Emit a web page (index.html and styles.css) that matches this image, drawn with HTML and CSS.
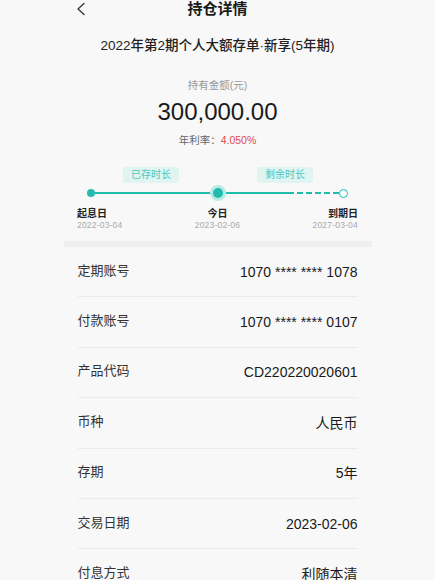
FILE: index.html
```html
<!DOCTYPE html>
<html lang="zh-CN">
<head>
<meta charset="utf-8">
<title>持仓详情</title>
<link rel="stylesheet" href="styles.css">
</head>
<body>
<div class="page">
  <header class="header">
    <div class="back">
      <svg width="10" height="14" viewBox="0 0 10 14"><path d="M8 1.5 L2 7 L8 12.5" fill="none" stroke="#333" stroke-width="1.3" stroke-linecap="round" stroke-linejoin="round"/></svg>
    </div>
    <div class="title">持仓详情</div>
    <div></div>
  </header>

  <div class="product">2022年第2期个人大额存单·新享(5年期)</div>

  <div class="hold-label">持有金额(元)</div>
  <div class="amount">300,000.00</div>
  <div class="rate">年利率：<span class="rate-val">4.050%</span></div>

  <div class="timeline">
    <div class="pills">
      <span class="pill">已存时长</span>
      <span class="pill pill-2">剩余时长</span>
    </div>
    <div class="track">
      <span class="dot"></span>
      <span class="seg seg-1"></span>
      <span class="now"><span class="now-core"></span></span>
      <span class="seg seg-2"></span>
      <span class="dash"></span>
      <span class="end"></span>
    </div>
    <div class="marks">
      <div class="mark mark-l"><div class="mark-name">起息日</div><div class="mark-date">2022-03-04</div></div>
      <div class="mark mark-c"><div class="mark-name">今日</div><div class="mark-date">2023-02-06</div></div>
      <div class="mark mark-r"><div class="mark-name">到期日</div><div class="mark-date">2027-03-04</div></div>
    </div>
  </div>

  <div class="gap-bar"></div>

  <div class="rows">
    <div class="row"><span class="k">定期账号</span><span class="v">1070 **** **** 1078</span></div>
    <div class="row"><span class="k">付款账号</span><span class="v">1070 **** **** 0107</span></div>
    <div class="row"><span class="k">产品代码</span><span class="v">CD220220020601</span></div>
    <div class="row"><span class="k">币种</span><span class="v">人民币</span></div>
    <div class="row"><span class="k">存期</span><span class="v">5年</span></div>
    <div class="row"><span class="k">交易日期</span><span class="v">2023-02-06</span></div>
    <div class="row"><span class="k">付息方式</span><span class="v">利随本清</span></div>
  </div>
</div>
</body>
</html>
```

FILE: styles.css
```css
* { box-sizing: border-box; }
html, body {
  margin: 0;
  padding: 0;
  background: #f8f8f8;
}
body {
  font-family: "Liberation Sans", "Noto Sans CJK SC", sans-serif;
  color: #222;
  overflow: hidden;
  height: 580px;
}
.page {
  width: 308px;
  margin: 0 auto;
}
.header {
  display: grid;
  grid-template-columns: 1fr auto 1fr;
  align-items: center;
  height: 17px;
}
.back {
  padding-left: 12px;
  display: flex;
  align-items: center;
}
.back svg { display: block; }
.title {
  font-size: 15px;
  font-weight: 700;
  line-height: 17px;
  color: #1a1a1a;
}
.product {
  margin-top: 19px;
  text-align: center;
  font-size: 13.5px;
  font-weight: 500;
  line-height: 20px;
  color: #222;
}
.hold-label {
  margin-top: 22px;
  text-align: center;
  font-size: 10.5px;
  line-height: 14px;
  color: #999;
}
.amount {
  margin-top: 6px;
  text-align: center;
  font-size: 24px;
  line-height: 28px;
  color: #1a1a1a;
}
.rate {
  margin-top: 7px;
  text-align: center;
  font-size: 10.5px;
  line-height: 14px;
  color: #666;
}
.rate-val { color: #e0484e; }

.timeline { margin-top: 20px; }
.pills {
  display: flex;
  padding-left: 59.5px;
  gap: 78px;
}
.pill {
  width: 56px;
  height: 16px;
  border-radius: 3px;
  background: #e0f5f2;
  color: #4fc6bb;
  font-size: 10px;
  line-height: 16px;
  text-align: center;
}
.track {
  margin-top: 2px;
  height: 16px;
  display: flex;
  align-items: center;
  padding-left: 23.5px;
}
.dot {
  width: 8px;
  height: 8px;
  border-radius: 50%;
  background: #22bcae;
  flex: none;
}
.seg {
  height: 2.5px;
  background: #22bcae;
  flex: none;
}
.seg-1 { width: 115px; }
.seg-2 { width: 62px; }
.now {
  width: 16px;
  height: 16px;
  border-radius: 50%;
  background: #b9ebe5;
  display: flex;
  align-items: center;
  justify-content: center;
  flex: none;
}
.now-core {
  width: 10px;
  height: 10px;
  border-radius: 50%;
  background: #22bcae;
}
.dash {
  width: 50.5px;
  height: 0;
  border-top: 2px dashed #22bcae;
  flex: none;
}
.end {
  width: 9px;
  height: 9px;
  border-radius: 50%;
  border: 1.5px solid #22bcae;
  background: #fff;
  flex: none;
}
.marks {
  margin-top: 7px;
  display: flex;
  justify-content: space-between;
  padding: 0 13.5px;
}
.mark-l { text-align: left; }
.mark-c { text-align: center; }
.mark-r { text-align: right; }
.mark-name {
  font-size: 10px;
  font-weight: 700;
  line-height: 12px;
  color: #222;
}
.mark-date {
  font-size: 8.5px;
  line-height: 10px;
  color: #aaa;
  letter-spacing: 0.2px;
}
.gap-bar {
  margin-top: 11px;
  height: 6px;
  background: #efefef;
}
.rows { padding: 0 14px; }
.row {
  height: 50.4px;
  display: flex;
  justify-content: space-between;
  align-items: center;
  border-bottom: 1px solid #ebebeb;
}
.k {
  font-size: 13px;
  color: #333;
  line-height: 18px;
  margin-top: -2px;
}
.v {
  font-size: 14px;
  color: #1a1a1a;
  line-height: 18px;
}
```
